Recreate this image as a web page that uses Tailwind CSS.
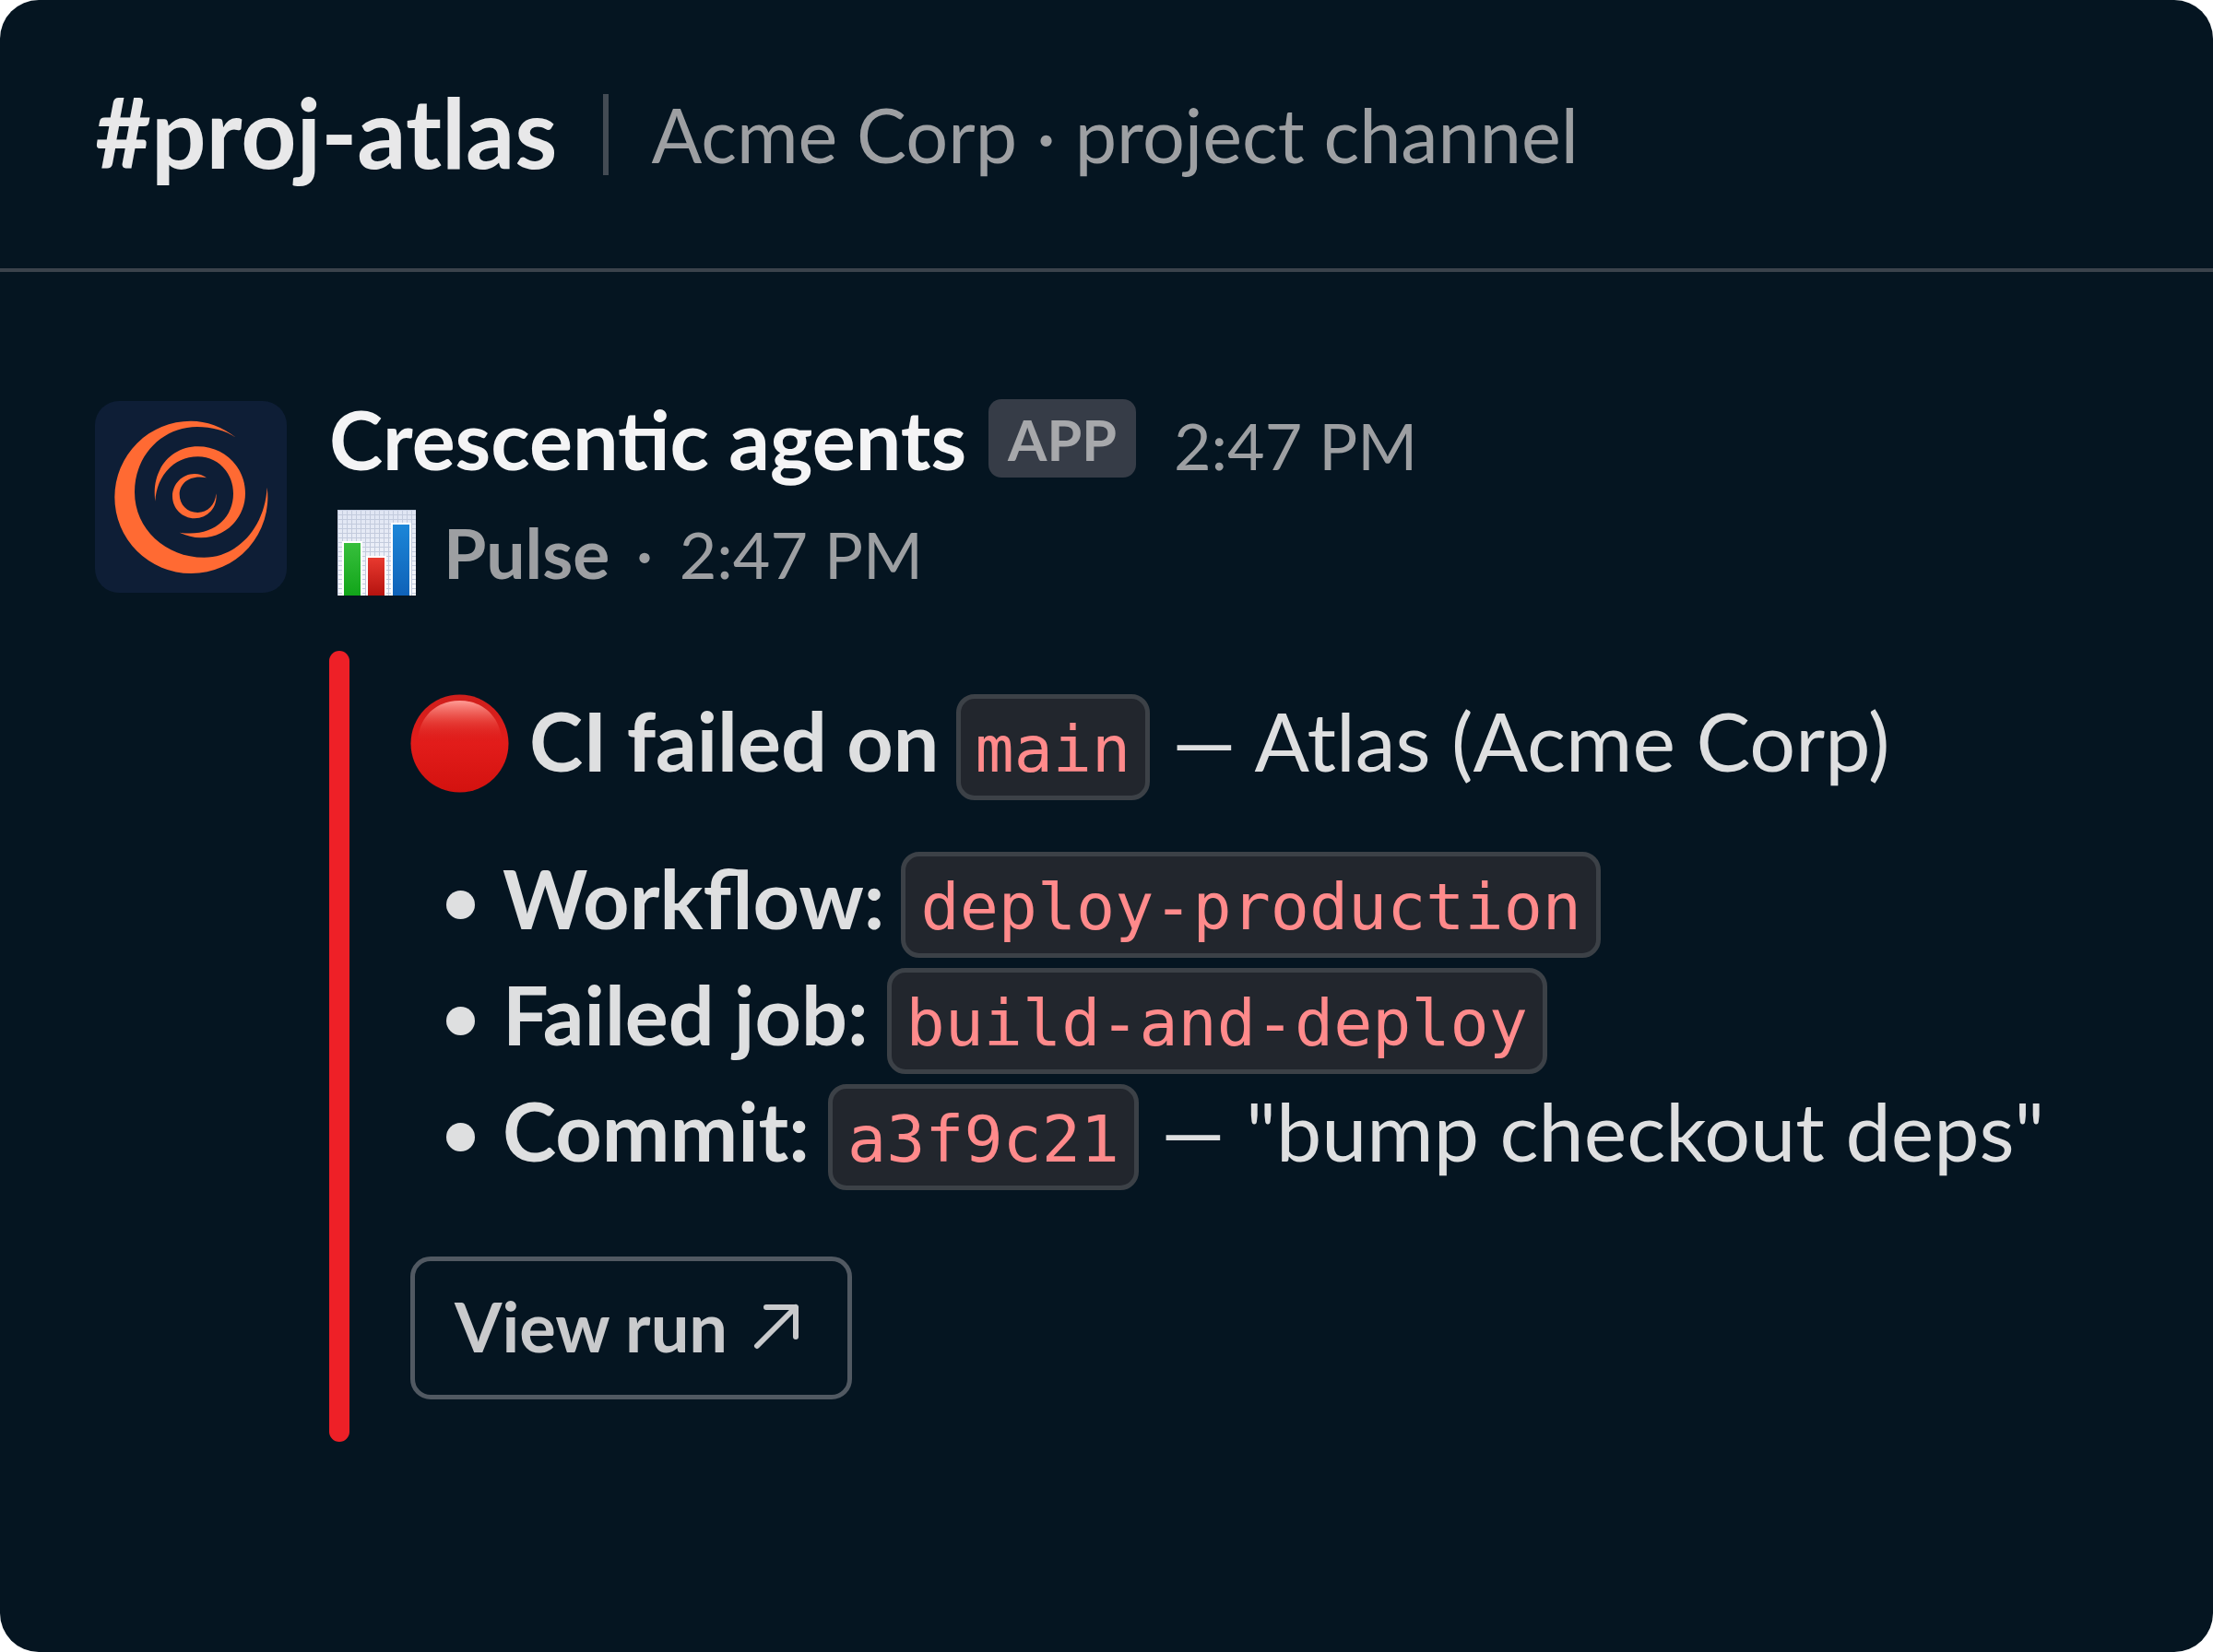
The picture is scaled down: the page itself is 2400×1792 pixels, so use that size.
<!DOCTYPE html>
<html lang="en">
<head>
<meta charset="utf-8">
<meta name="viewport" content="width=device-width, initial-scale=1">
<title>#proj-atlas</title>
<script src="https://cdn.jsdelivr.net/npm/@tailwindcss/browser@4"></script>
</head>
<body class="bg-white font-['Lato',sans-serif] text-[88px] leading-[100px] text-[#dedfe0]">
<div class="flex min-h-screen flex-col overflow-hidden rounded-[42px] bg-[#051521]">
  <header class="flex h-[295px] items-center border-b-4 border-[#3b434c] pl-[103px] whitespace-nowrap">
    <h1 class="pb-2 text-[105px] leading-[120px] font-bold text-[#e8e8e9]">#proj-atlas</h1>
    <span class="ml-[50px] h-[88px] w-[6px] bg-[#434b54]"></span>
    <p class="ml-[46px] text-[81px] text-[#9d9fa2]">Acme Corp · project channel</p>
  </header>

  <main class="flex-1 pt-[138px] pb-16">
    <article class="flex gap-[46px] pl-[103px] whitespace-nowrap">
      <svg class="mt-[2px] size-[208px] shrink-0 rounded-[26px] bg-[#0e1e36]" viewBox="40 44 624 624" fill="#ff6a33" role="img" aria-label="Crescentic">
        <path d="M500 164Q430 109 352 109A248 248 0 0 0 352 605A248 248 0 0 0 600 325C592 460 500 553 395 553C270 553 169 460 169 340C169 220 260 128 372 128C420 128 465 140 500 164Z"/>
        <path d="M236 370C222 270 285 192 375 192C462 192 529 260 529 345C529 425 465 489 385 489C360 489 338 482 315 472C420 488 490 430 490 345C490 278 440 225 375 225C295 225 240 290 236 370Z"/>
        <path d="M403 294C392 285 378 281 364 281C324 281 292 314 292 354C292 394 324 426 364 426C406 426 440 390 434 345C432 382 406 407 374 407C340 407 315 382 315 348C315 315 345 283 403 294Z"/>
      </svg>

      <div>
        <div class="flex h-[88px] items-baseline">
          <h2 class="leading-[86px] font-bold text-[#f4f4f5]">Crescentic agents</h2>
          <span class="ml-6 h-[85px] self-start rounded-[14px] bg-[#363c47] px-[21px] text-[61px] leading-[88px] font-bold text-[#a7a8ab]">APP</span>
          <time class="ml-[41px] text-[70px] leading-[86px] text-[#9d9fa2]">2:47 PM</time>
        </div>

        <div class="mt-8 flex h-[93px] items-baseline text-[75px] leading-[93px] text-[#9d9fa2]">
          <svg class="ml-[9px] h-[93px] w-[85px] shrink-0 self-start" viewBox="0 0 85 93" role="img" aria-label="Bar chart">
            <defs>
              <pattern id="grid" width="5" height="5" patternUnits="userSpaceOnUse"><path d="M0 .5H5M.5 0V5" stroke="#c3cbdd" stroke-width="1"/></pattern>
              <linearGradient id="paper" x2="0" y2="1"><stop stop-color="#dfe5f3"/><stop offset="1" stop-color="#fafafd"/></linearGradient>
              <linearGradient id="green" x2="0" y2="1"><stop stop-color="#37bf3c"/><stop offset="1" stop-color="#12a51a"/></linearGradient>
              <linearGradient id="red" x2="0" y2="1"><stop stop-color="#e8392f"/><stop offset="1" stop-color="#b5130f"/></linearGradient>
              <linearGradient id="blue" x2="0" y2="1"><stop stop-color="#1c86d8"/><stop offset="1" stop-color="#0f62b8"/></linearGradient>
            </defs>
            <path fill="url(#paper)" d="M0 0H85V93H0Z"/>
            <path fill="url(#grid)" d="M0 0H85V93H0Z"/>
            <path fill="#fff" d="M5 34H27V93H5ZM31 50H53V93H31ZM58 14H80V93H58Z"/>
            <path fill="url(#green)" d="M7 36H25V93H7Z"/>
            <path fill="url(#red)" d="M33 52H51V93H33Z"/>
            <path fill="url(#blue)" d="M60 16H78V93H60Z"/>
          </svg>
          <span class="ml-[30px] font-bold">Pulse</span>
          <span class="ml-7">·</span>
          <time class="ml-7 text-[70px]">2:47 PM</time>
        </div>

        <div class="mt-[60px] flex gap-[66px]">
          <div class="w-[22px] shrink-0 rounded-full bg-[#ee2027]"></div>
          <div class="pt-[47px] pb-[46px]">
            <div class="flex items-baseline">
              <svg class="mb-2 size-[107px] shrink-0 self-center" viewBox="0 0 107 107" role="img" aria-label="Failed">
                <defs>
                  <linearGradient id="ball" x2="0" y2="1"><stop stop-color="#cf1f1c"/><stop offset=".5" stop-color="#e21c1a"/><stop offset="1" stop-color="#d3120f"/></linearGradient>
                  <linearGradient id="shine" x2="0" y2="1"><stop stop-color="#ff9d96"/><stop offset=".5" stop-color="#ec4a42" stop-opacity=".7"/><stop offset="1" stop-color="#e21c1a" stop-opacity="0"/></linearGradient>
                </defs>
                <circle cx="53.5" cy="53.5" r="53" fill="url(#ball)"/>
                <path fill="url(#shine)" d="M8 53C8 26 27 7 53.500 7S99 26 99 53Z"/>
              </svg>
              <strong class="ml-[22px] font-bold">CI failed on</strong>
              <code class="ml-[18px] rounded-[20px] border-5 border-[#3c4147] bg-[#22262d] px-4 pt-[6px] font-['DejaVu_Sans_Mono',monospace] text-[70px] leading-[99px] text-[#ff8a8b]">main</code>
              <span class="ml-6">— Atlas (Acme Corp)</span>
            </div>

            <ul class="mt-14 flex flex-col gap-[11px] pl-[39px]">
              <li class="flex items-baseline">
                <span class="size-[31px] shrink-0 self-center rounded-full bg-current"></span>
                <strong class="ml-[30px] font-bold">Workflow:</strong>
                <code class="ml-[18px] rounded-[20px] border-5 border-[#3c4147] bg-[#22262d] px-4 pt-[6px] font-['DejaVu_Sans_Mono',monospace] text-[70px] leading-[99px] text-[#ff8a8b]">deploy-production</code>
              </li>
              <li class="flex items-baseline">
                <span class="size-[31px] shrink-0 self-center rounded-full bg-current"></span>
                <strong class="ml-[30px] font-bold">Failed job:</strong>
                <code class="ml-5 rounded-[20px] border-5 border-[#3c4147] bg-[#22262d] px-4 pt-[6px] font-['DejaVu_Sans_Mono',monospace] text-[70px] leading-[99px] text-[#ff8a8b]">build-and-deploy</code>
              </li>
              <li class="flex items-baseline">
                <span class="size-[31px] shrink-0 self-center rounded-full bg-current"></span>
                <strong class="ml-[30px] font-bold">Commit:</strong>
                <code class="ml-5 rounded-[20px] border-5 border-[#3c4147] bg-[#22262d] px-4 pt-[6px] font-['DejaVu_Sans_Mono',monospace] text-[70px] leading-[99px] text-[#ff8a8b]">a3f9c21</code>
                <span class="ml-6">— "bump checkout deps"</span>
              </li>
            </ul>

            <button type="button" class="mt-[72px] flex h-[155px] items-center gap-7 rounded-[22px] border-5 border-[#515962] pr-[52px] pb-1 pl-[43px] text-[74px] font-bold text-[#c9cacc]">
              View run
              <svg class="size-[50px]" viewBox="0 0 50 50" fill="none" stroke="currentColor" stroke-width="6" stroke-linecap="round" stroke-linejoin="round" aria-hidden="true"><path d="M4 46L46 4M14 4H46V36"/></svg>
            </button>
          </div>
        </div>
      </div>
    </article>
  </main>
</div>
</body>
</html>
